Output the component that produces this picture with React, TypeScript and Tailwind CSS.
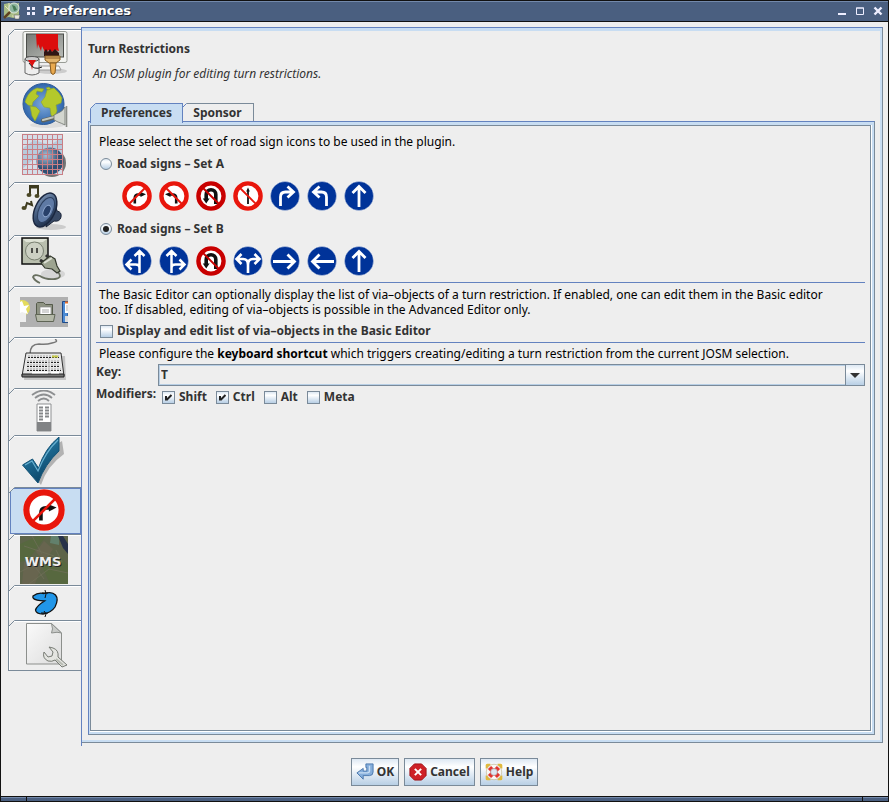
import React, { useState } from 'react';

type Children = { children?: React.ReactNode };

/* ---------- road signs ---------- */

function Prohibit({ tone = '#e8160c', flip = false, size = 'size-[30px]', children }: Children & { tone?: string; flip?: boolean; size?: string }) {
  return (
    <svg viewBox="0 0 30 30" className={size} aria-hidden="true">
      <circle cx="15" cy="15" r="15" fill="#fff" />
      <circle cx="15" cy="15" r="12.6" fill="#fff" stroke={tone} strokeWidth="4.4" />
      {children}
      <path d={flip ? 'M6 24 24 6' : 'M6 6 24 24'} stroke={tone} strokeWidth="1.900" />
    </svg>
  );
}

function Mandatory({ children }: Children) {
  return (
    <svg viewBox="0 0 30 30" className="size-[30px]" aria-hidden="true">
      <circle cx="15" cy="15" r="15" fill="#fff" />
      <circle cx="15" cy="15" r="14.5" fill="#003399" stroke="#ccd3de" strokeWidth=".5" />
      <g fill="none" stroke="#fff" strokeWidth="2.8">{children}</g>
    </svg>
  );
}

const bentRight = (
  <g>
    <path d="M12.800 22.500v-5.500q0-3.500 3.500-3.500h3" fill="none" stroke="#111" strokeWidth="2.600" />
    <path d="M18.500 11 24 13.300 18.500 16z" fill="#111" />
  </g>
);
const NoRight = ({ size }: { size?: string }) => <Prohibit flip size={size}>{bentRight}</Prohibit>;
const NoLeft = () => <Prohibit><g transform="translate(30 0) scale(-1 1)">{bentRight}</g></Prohibit>;
const NoUTurn = () => (
  <Prohibit tone="#c80000">
    <path d="M10.200 19v-5.500a4.800 4.800 0 0 1 9.600 0V23" fill="none" stroke="#111" strokeWidth="3.600" />
    <path d="M6.800 17.500h6.800l-3.400 5z" fill="#111" />
  </Prohibit>
);
const NoStraight = () => (
  <Prohibit>
    <path d="M15 23V9" stroke="#111" strokeWidth="1.800" />
    <path d="M13.200 10.500 15 6.500 16.800 10.500z" fill="#111" />
  </Prohibit>
);
const OnlyRight = () => <Mandatory><path d="M10.500 25v-9q0-5 5-5h8M17.500 5.500l6 5.500-6 5.500" /></Mandatory>;
const OnlyLeft = () => <Mandatory><path d="M19.500 25v-9q0-5-5-5h-8M12.500 5.500l-6 5.500 6 5.500" /></Mandatory>;
const OnlyStraight = () => <Mandatory><path d="M15 26V6M8.500 12 15 5.500l6.500 6.500" /></Mandatory>;
const StraightLeft = () => <Mandatory><path d="M17.500 27V5.500M12.500 10l5-5 5 5M17.500 24v-2q0-3.500-4-3.500H4.500M9.500 13.500l-5 5 5 5" strokeWidth="2.500" /></Mandatory>;
const StraightRight = () => <Mandatory><path d="M12.500 27V5.500M7.500 10l5-5 5 5M12.500 24v-2q0-3.500 4-3.500h9M20.500 13.500l5 5-5 5" strokeWidth="2.500" /></Mandatory>;
const LeftRight = () => <Mandatory><path d="M15 27v-8q0-6-5-6H3.500M15 19q0-6 5-6h6.500M8.500 8l-5 5 5 5M21.500 8l5 5-5 5" strokeWidth="2.600" /></Mandatory>;
const ArrowRight = () => <Mandatory><path d="M3 15.500h22M17.500 8.500l7 7-7 7" /></Mandatory>;
const ArrowLeft = () => <Mandatory><path d="M27 15.500H5M12.500 8.500l-7 7 7 7" /></Mandatory>;

/* ---------- category icons ---------- */

function Art({ children }: Children) {
  return <svg viewBox="0 0 48 48" className="size-12 shrink-0" aria-hidden="true">{children}</svg>;
}

const DisplayIcon = () => (
  <Art>
    <defs><linearGradient id="scr" x2="1" y2="1"><stop stopColor="#777a76" /><stop offset="1" stopColor="#b9bcb7" /></linearGradient></defs>
    <ellipse cx="31" cy="40" rx="16" ry="3" fill="#ccc" />
    <path d="M12 35h27l2 4H12z" fill="#f5f5f3" stroke="#999" />
    <rect x="3" y=".5" width="44" height="31" rx="2" fill="#f3f4f1" stroke="#999c96" />
    <rect x="6.500" y="3" width="37" height="23" fill="url(#scr)" stroke="#4b4d49" />
    <path d="M16 3h22v13l1 4-4-1-3 2-3-2-4 2-3-6-1 5-3-7-1 5z" fill="#dc0d0d" />
    <path d="M26 18l2 3 2-3 2 3 3-3 4 4v3H24v-4z" fill="#301515" />
    <path d="M25 25h15v4l-4 3h-7l-4-3z" fill="#e3b46b" stroke="#865a1f" />
    <path d="M25 27h15" stroke="#8b5b29" />
    <path d="M30 32h6l-1 10q-2 3-4 0z" fill="#e9a94e" stroke="#865a1f" />
    <path d="M5 28v14q7 4 14 0V28z" fill="#eee" stroke="#666" />
    <ellipse cx="12" cy="28" rx="7" ry="2.500" fill="#ccc" stroke="#555" />
    <path d="M8 29h8l-3 5-1 5-1-5z" fill="#d11" />
    <path d="M9 32q5 8 13 4" fill="none" stroke="#222" />
  </Art>
);
const GlobeIcon = () => (
  <Art>
    <defs><radialGradient id="sea"><stop stopColor="#80aadc" /><stop offset="1" stopColor="#2f66ac" /></radialGradient></defs>
    <ellipse cx="27" cy="43" rx="17" ry="3" fill="#ddd" />
    <circle cx="23.500" cy="22" r="20.500" fill="url(#sea)" stroke="#2c5a99" />
    <path d="M6 17q3-8 11-11l7 1-2 3-5-1-1 3 3 2-3 3-3 3-1 4-4-1-3-3zM10 24l6 1 4 4-2 4-3 6-3-5-1-5zM27 8l7-2q5 4 8 10l-1 5-5 2 1 6-3 7-3-3-1-7-6-1-3-5 4-5zM26 6l3-1 2 2-3 1z" fill="#b4c92b" stroke="#8ca52a" strokeWidth=".6" />
    <path d="M23 38.500l13-3.500" stroke="#5f635d" strokeWidth="4" strokeLinecap="round" />
    <path d="M23 38l13-3.500" stroke="#c3c7be" strokeWidth="2.200" strokeLinecap="round" />
    <path d="M34 33l4-2q4-1 7-6v18q-4-2-7-3l-4-2z" fill="#d3d6cf" stroke="#6f736d" strokeWidth=".8" />
    <path d="M46.500 24v21" stroke="#8b8e88" strokeWidth="1.600" />
  </Art>
);
const GridIcon = () => (
  <Art>
    <defs><radialGradient id="orb" cx=".35" cy=".3"><stop stopColor="#a9bfd4" /><stop offset="1" stopColor="#2f4f72" /></radialGradient></defs>
    <circle cx="32" cy="30" r="14" fill="#555" opacity=".8" />
    <rect x="2" y="1" width="41" height="41" fill="#d5dee8" />
    <path d="M2 16l12-9 16 5 13-8v22H14L2 36z" fill="#b8cbdc" />
    <circle cx="30" cy="28" r="13.500" fill="url(#orb)" />
    <path d="M2.500 1v41M7.500 1v41M12.500 1v41M17.500 1v41M22.500 1v41M27.500 1v41M32.500 1v41M37.500 1v41M42.500 1v41M2 1.500h41M2 6.500h41M2 11.500h41M2 16.500h41M2 21.500h41M2 26.500h41M2 31.500h41M2 36.500h41M2 41.500h41" stroke="#c97f86" />
  </Art>
);
const AudioIcon = () => (
  <Art>
    <defs><linearGradient id="cone" x2="1" y2="1"><stop stopColor="#8aa0c0" /><stop offset=".5" stopColor="#3d5578" /><stop offset="1" stopColor="#16243c" /></linearGradient></defs>
    <ellipse cx="31" cy="42" rx="15" ry="3" fill="#ccc" />
    <path d="M33 10l4 16q5 1 4 6t-7 4l-8 6z" fill="#394a66" stroke="#1b2538" />
    <ellipse cx="25" cy="25" rx="10" ry="18" transform="rotate(25 25 25)" fill="url(#cone)" stroke="#1b2740" strokeWidth="1.500" />
    <ellipse cx="26" cy="25" rx="7" ry="13.500" transform="rotate(25 26 25)" fill="#5f7aa5" stroke="#2c3f5f" />
    <ellipse cx="27" cy="26" rx="3.500" ry="6" transform="rotate(25 27 26)" fill="#28406a" stroke="#8ea6cd" />
    <path d="M10 10V1h8v9M10 2.500h8" fill="none" stroke="#3d3a1f" strokeWidth="2" />
    <ellipse cx="9" cy="10" rx="2.500" ry="2" fill="#4a4725" /><ellipse cx="17" cy="11" rx="2.500" ry="2" fill="#4a4725" />
    <path d="M5 24l2-6 5 2-1-4" fill="none" stroke="#3d3a1f" strokeWidth="2" /><ellipse cx="4" cy="23" rx="2.500" ry="2" fill="#4a4725" />
  </Art>
);
const SocketIcon = () => (
  <Art>
    <ellipse cx="33" cy="37" rx="12" ry="5" fill="#d5d5d5" />
    <rect x="2" y="1" width="26" height="26" fill="#b9bfae" stroke="#111" strokeWidth="1.500" />
    <path d="M3 2h24l-4 3H6z" fill="#dfe3d6" />
    <circle cx="14.500" cy="14" r="9" fill="#ccd0c3" stroke="#798071" />
    <path d="M12 11v5M17 11v5" stroke="#222" strokeWidth="1.500" />
    <path d="M38 35q5 6-3 7-9 1-15-3-6-2-7 1 2 4 7 6" fill="none" stroke="#697060" strokeWidth="1.800" />
    <path d="M20 23l5 3M26 18l4 4" stroke="#333" strokeWidth="3" />
    <path d="M21 26l9-7 5 3 2 7 3 5-3 2-5-4-7-1z" fill="#9da490" stroke="#343a2e" strokeWidth="1.200" />
    <path d="M24 26l8-5" stroke="#dde0d5" strokeWidth="2" />
  </Art>
);
const ToolbarIcon = () => (
  <svg viewBox="0 0 48 30" className="h-[30px] w-12 shrink-0" aria-hidden="true">
    <rect width="48" height="30" fill="#b0b0b0" />
    <circle cx="2" cy="11" r="8" fill="#f5e93f" opacity=".75" />
    <path d="M0 14h6v11H0z" fill="#eee" />
    <path d="M2 4l2 5 5-1-3 4 2 5-6-2-2 1V5z" fill="#fff" />
    <path d="M16.500 20V6.500l1-1h6l2 2h7V20z" fill="#8e9383" stroke="#555b4b" />
    <path d="M20 10h11v9H20z" fill="#fff" stroke="#888" strokeWidth=".7" />
    <path d="M22 13h7M22 15h7" stroke="#aaa" />
    <path d="M15.500 17.500h19.500l-1.500 7h-16.500z" fill="#b4b8a8" stroke="#5f6555" />
    <path d="M42.500 4.500H48v21h-5.500z" fill="#4c8bd4" stroke="#204a87" />
    <path d="M45 5h3v11h-3z" fill="#fff" /><path d="M45 5.500h3" stroke="#e9722c" strokeWidth="2" />
    <path d="M46 9h2M46 11h2M46 13h2" stroke="#999" strokeWidth=".7" />
    <path d="M45 19h3v6h-3z" fill="#ddd" />
  </svg>
);
const KeyboardIcon = () => (
  <Art>
    <path d="M10 15q0-10 9-10 7 1 13-1 6-1 4-3l-1-2" fill="none" stroke="#777" strokeWidth="1.500" />
    <path d="M6 17h39l1 24H4z" fill="#aaa" opacity=".6" />
    <path d="M6 14h35l3 23H2z" fill="#e8e8e8" stroke="#333" />
    <path d="M2 35h42v3H2z" fill="#777" stroke="#222" />
    <path d="M8 17.500h31M7 22.500h33M7 26.500h33M7 30.500h34" stroke="#222" strokeWidth="3" strokeDasharray="2 1" />
    <path d="M8 17h31M7 22h33M7 26h33M7 30h34" stroke="#fff" strokeWidth="1.700" strokeDasharray="2 1" />
    <path d="M32 17.500h6" stroke="#c9cd48" strokeWidth="2" />
    <path d="M12 33.500h16M31 33.500h8" stroke="#fff" strokeWidth="2" />
    <path d="M29 19v14" stroke="#ccc" strokeWidth="1.500" />
  </Art>
);
const RemoteIcon = () => (
  <svg viewBox="0 0 48 44" className="h-11 w-12 shrink-0" aria-hidden="true">
    <g fill="none" stroke="#8d8f91" strokeWidth="1.800">
      <path d="M12 5q12-9 23 0M15 8q9-7 17 0M18 11q6-5 11 0" />
    </g>
    <path d="M17 14h14v27H17z" fill="#fff" stroke="#8d8f91" />
    <path d="M17 32h14v9H17z" fill="#818385" />
    <path d="M19 17.500h4M25 17.500h4M19 20.500h4M25 20.500h4M19 23.500h4M25 23.500h4M19 26.500h4M25 26.500h4M19 29.500h4" stroke="#858789" strokeWidth="1.800" />
  </svg>
);
const CheckIcon = () => (
  <Art>
    <defs><linearGradient id="chk" x1=".2" y1="0" x2=".7" y2="1"><stop stopColor="#2c88b4" /><stop offset="1" stopColor="#083f61" /></linearGradient></defs>
    <path d="M7 30l6-5 6 9Q26 13 42 4l2 13Q27 29 21 48z" fill="#999" opacity=".7" />
    <path d="M2.500 28l10-6 6 9Q25 11 39 0v14Q25 27 18 46z" fill="url(#chk)" stroke="#145477" />
    <path d="M5 28l7-4 6 10Q26 14 38 3" fill="none" stroke="#69b1d2" strokeWidth="1.200" />
  </Art>
);
const WmsIcon = () => (
  <Art>
    <rect width="48" height="48" fill="#5d6449" />
    <path d="M0 8l18-8h8L8 24 0 26zM22 30l18-9 8 8v19H30z" fill="#57683f" />
    <path d="M4 26l18 4-7 18H2zM24 5l9 8-8 12-9-9z" fill="#68654f" />
    <path d="M31 0h8v9l-9-2z" fill="#62806c" />
    <path d="M38 0l5 12 5 6V8L43 0z" fill="#273249" />
    <path d="M0 36l14-7 10 14M4 10l30 10M9 48l20-15 19 4M12 0l10 18M36 14l6 12" fill="none" stroke="#6f6f58" strokeWidth=".8" />
    <text x="24" y="31" textAnchor="middle" fontFamily="DejaVu Sans, sans-serif" fontSize="13" fontWeight="bold" fill="#222" aria-hidden="true">WMS</text>
    <text x="23" y="30" textAnchor="middle" fontFamily="DejaVu Sans, sans-serif" fontSize="13" fontWeight="bold" fill="#eee">WMS</text>
  </Art>
);
const BlobIcon = () => (
  <svg viewBox="0 0 48 28" className="h-7 w-12 shrink-0" aria-hidden="true">
    <path d="M13 7Q18 3 24 4.500 32 2 35.500 6 39 10 35 18 31 24 23 25 16 25 15.500 21q1-4 9-9-9-.5-11-2.500-1-1-.5-2.500z" fill="#2196e8" stroke="#111" strokeWidth="1.300" />
    <path d="M25 1l1 4-1 4M22 4h6M24 22l2 3-1 3M21 24h7" fill="none" stroke="#111" />
  </svg>
);
const AdvancedIcon = () => (
  <Art>
    <defs><linearGradient id="pg" x2="1" y2="1"><stop stopColor="#fafafa" /><stop offset="1" stopColor="#ddd" /></linearGradient></defs>
    <path d="M6.500 2.500h25l10 9.500v31h-35z" fill="url(#pg)" stroke="#8c8f8c" />
    <path d="M31.500 2.500q2 6 0 9.500 6-1.500 10 0z" fill="#c9cbc9" stroke="#8c8f8c" />
    <path d="M24 31q-2 6 4 9 4 1 7-1l7 7 5-2-9-8q1-7-5-9l-4-1 4 5-1 4-4 1z" fill="#e4e5e1" stroke="#777b74" />
    <path d="M36 38l7 6" stroke="#b8bbb3" strokeWidth="2" />
  </Art>
);

const categories: { name: string; height: string; icon: React.ReactNode }[] = [
  { name: 'Display', height: 'h-[51px]', icon: <DisplayIcon /> },
  { name: 'Connection', height: 'h-[51px]', icon: <GlobeIcon /> },
  { name: 'Projection', height: 'h-[51px]', icon: <GridIcon /> },
  { name: 'Audio', height: 'h-[53px]', icon: <AudioIcon /> },
  { name: 'Plugins', height: 'h-[51px]', icon: <SocketIcon /> },
  { name: 'Toolbar', height: 'h-[51px]', icon: <ToolbarIcon /> },
  { name: 'Keyboard', height: 'h-[51px]', icon: <KeyboardIcon /> },
  { name: 'Remote control', height: 'h-[47px]', icon: <RemoteIcon /> },
  { name: 'Validator', height: 'h-[52px]', icon: <CheckIcon /> },
  { name: 'Turn restrictions', height: 'h-[47px]', icon: <NoRight size="size-[42px]" /> },
  { name: 'WMS', height: 'h-[51px]', icon: <WmsIcon /> },
  { name: 'Areas', height: 'h-[35px]', icon: <BlobIcon /> },
  { name: 'Advanced', height: 'h-[50px]', icon: <AdvancedIcon /> },
];

function Sidebar() {
  const [active, setActive] = useState('Turn restrictions');
  return (
    <nav className="mt-[7px] ml-[7px] w-[73px] shrink-0 self-start border-b border-[#7a8a99]">
      {categories.map((c, i) => (
        <button
          key={c.name}
          type="button"
          aria-label={c.name}
          onClick={() => setActive(c.name)}
          className={`relative flex w-full border-t border-l border-[#7a8a99] ${c.height} ${active === c.name ? 'pl-px' : ''}`}
        >
          <span className={`flex h-full w-full items-center justify-center pr-1 pb-0.5 ${active === c.name ? 'border border-[#6382bf] bg-[#c8ddf2]' : 'border-t border-l border-white'}`}>
            {c.icon}
          </span>
          <svg viewBox="0 0 7 7" className="absolute -top-px -left-px size-[7px]" aria-hidden="true">
            <path d="M0 0h7L0 7z" fill="#eee" />
            {i > 0 && <path d="M.5 0v7" stroke="#7a8a99" />}
            <path d="M.5 6.500l6-6" stroke="#7a8a99" />
          </svg>
        </button>
      ))}
    </nav>
  );
}

/* ---------- form controls ---------- */

const face = 'border-[#7a8a99] bg-linear-to-b from-[#dde8f3] via-white via-30% to-[#b8cfe5]';

function Check({ label, on = false }: { label: string; on?: boolean }) {
  return (
    <label className="relative flex h-5 items-center gap-1 font-bold text-[#333]">
      <input type="checkbox" defaultChecked={on} className={`peer size-[13px] shrink-0 appearance-none border ${face}`} />
      <svg viewBox="0 0 13 13" className="pointer-events-none absolute left-0 hidden size-[13px] peer-checked:block" aria-hidden="true">
        <path d="M4 5v4.500M4.500 9 9.500 4" fill="none" stroke="#222" strokeWidth="2" />
      </svg>
      {label}
    </label>
  );
}

function Radio({ label, on = false }: { label: string; on?: boolean }) {
  return (
    <label className="relative ml-1 flex h-5 items-center gap-[5px] font-bold text-[#333]">
      <input type="radio" name="signs" defaultChecked={on} className={`peer size-3 shrink-0 appearance-none rounded-full border ${face}`} />
      <span className="pointer-events-none absolute left-[3px] hidden size-1.5 rounded-full bg-[#222] peer-checked:block" />
      {label}
    </label>
  );
}

function Signs({ children }: Children) {
  return <div className="ml-[26px] flex gap-[7px] pt-[7px]">{children}</div>;
}

function ActionButton({ label, children }: Children & { label: string }) {
  return (
    <button type="button" className={`flex h-7 items-center gap-[3px] border px-1 font-bold text-[#333] ${face}`}>
      <svg viewBox="0 0 20 20" className="size-[18px]" aria-hidden="true">{children}</svg>
      {label}
    </button>
  );
}

const rule = 'border-t border-[#6382bf]';

function PluginPreferences() {
  return (
    <form className="flex-1 border border-[#7a8a99] px-[5px] pt-2">
      <p className="ml-[3px] leading-4">Please select the set of road sign icons to be used in the plugin.</p>
      <div className="pt-1"><Radio label="Road signs – Set A" /></div>
      <Signs>
        <NoRight /><NoLeft /><NoUTurn /><NoStraight /><OnlyRight /><OnlyLeft /><OnlyStraight />
      </Signs>
      <div className="pt-2"><Radio label="Road signs – Set B" on /></div>
      <Signs>
        <StraightLeft /><StraightRight /><NoUTurn /><LeftRight /><ArrowRight /><ArrowLeft /><OnlyStraight />
      </Signs>
      <div className={`mt-1.5 pt-1 ${rule}`}>
        <p className="ml-[3px] pr-8 leading-[15px]">
          The Basic Editor can optionally display the list of via–objects of a turn restriction. If enabled, one can edit them in the Basic editor too. If disabled, editing of via–objects is possible in the Advanced Editor only.
        </p>
        <div className="mt-1 ml-1"><Check label="Display and edit list of via–objects in the Basic Editor" /></div>
      </div>
      <div className={`mt-px pt-[3px] ${rule}`}>
        <p className="ml-[3px] leading-4">
          Please configure the <b>keyboard shortcut</b> which triggers creating/editing a turn restriction from the current JOSM selection.
        </p>
        <div className="mt-0.5 grid grid-cols-[62px_1fr] font-bold text-[#333]">
          <label htmlFor="key" className="leading-4">Key:</label>
          <div className="relative h-[22px]">
            <select id="key" defaultValue="T" className="h-full w-full appearance-none border border-[#7a8a99] bg-[#eee] pl-0.5 font-bold inset-ring inset-ring-[#b8cfe5]">
              <option>T</option>
              <option>R</option>
            </select>
            <span className={`pointer-events-none absolute top-0 right-0 flex h-full w-5 items-center justify-center border ${face}`}>
              <svg viewBox="0 0 10 5" className="h-[5px] w-2.5" aria-hidden="true"><path d="M0 0h10L5 5z" fill="#333" /></svg>
            </span>
          </div>
          <span className="leading-4">Modifiers:</span>
          <div className="ml-1 flex gap-[9px] pt-px">
            <Check label="Shift" on />
            <Check label="Ctrl" on />
            <Check label="Alt" />
            <Check label="Meta" />
          </div>
        </div>
      </div>
    </form>
  );
}

function Corner() {
  return (
    <svg viewBox="0 0 6 6" className="absolute -top-px -left-px size-1.5" aria-hidden="true">
      <path d="M0 0h6L0 6z" fill="#eee" /><path d="M.5 5.500l5-5" stroke="#6382bf" />
    </svg>
  );
}

export default function App() {
  return (
    <div className="flex h-screen flex-col border-x border-[#111] bg-[#eee] font-['Noto_Sans',sans-serif] text-[12px] text-black">
      <header className="flex h-[22px] shrink-0 items-center border-y border-[#111] bg-[#4a5f80] pr-[5px] pl-0.5 font-['DejaVu_Sans',sans-serif] inset-shadow-[0_1px_0_#7389ab]">
        <svg viewBox="0 0 18 18" className="size-[18px]" aria-hidden="true">
          <path d="M1 2l5-1 4 1 6-1v14l-6 1-4-1-5 1z" fill="#a9bd86" />
          <path d="M2 4l6 6M6 1v9M9 14h7" stroke="#e4e3b9" />
          <circle cx="11" cy="6" r="5" fill="#8fb6a0" stroke="#dde7dd" />
          <path d="M9 3l3 1 2 4-3 1z" fill="#467a55" />
          <path d="M7 10l-6 6" stroke="#5f4221" strokeWidth="2.500" />
          <path d="M11 13h6l-1 4h-4z" fill="#e8e8e0" stroke="#555" strokeWidth=".5" />
        </svg>
        <svg viewBox="0 0 9 8" className="ml-1.5 h-2 w-[9px]" aria-hidden="true">
          <path d="M0 0h3v3H0zM5 0h3v3H5zM0 5h3v3H0zM5 5h3v3H5z" fill="#eef" />
        </svg>
        <h1 className="ml-[7px] flex-1 text-[13px] font-bold text-white text-shadow-[1px_1px_0_#1b2330]">Preferences</h1>
        <div className="flex gap-2">
          <button type="button" aria-label="Minimize" className="size-2.5"><svg viewBox="0 0 10 10"><path d="M1 7h8v2H1z" fill="#eef" /></svg></button>
          <button type="button" aria-label="Maximize" className="size-2.5"><svg viewBox="0 0 10 10"><path d="M1.500 2h7v6.500h-7zM1 2h8" fill="none" stroke="#eef" /></svg></button>
          <button type="button" aria-label="Close" className="size-2.5"><svg viewBox="0 0 10 10"><path d="M1.500 1.500l7 7M8.500 1.500l-7 7" stroke="#eef" strokeWidth="2.400" /></svg></button>
        </div>
      </header>

      <div className="flex min-h-0 flex-1">
        <Sidebar />
        <div className="mt-[5px] mr-[5px] flex min-w-0 flex-1 border-l border-[#6382bf] pb-[3px]">
          <main className="flex min-w-0 flex-1 flex-col border-t border-r border-b border-t-[#6382bf] border-r-[#7a8a99] border-b-[#7a8a99]">
            <div className="flex flex-1 flex-col border-t-3 border-r-2 border-b-2 border-[#c8ddf2] pr-[5px] pb-[5px] pl-1.5">
              <h2 className="mt-[9px] leading-[18px] font-bold text-[#333]">Turn Restrictions</h2>
              <p className="mt-[7px] ml-[5px] leading-[18px] text-[#333] italic">An OSM plugin for editing turn restrictions.</p>
              <div role="tablist" className="mt-5 ml-0.5 flex font-bold text-[#333]">
                <button type="button" role="tab" aria-selected="true" className="relative z-10 -mb-0.5 h-5 w-[93px] border-t border-r border-l border-[#6382bf] bg-[#c8ddf2] pb-0.5">
                  <Corner />Preferences
                </button>
                <button type="button" role="tab" aria-selected="false" className="relative -ml-px h-[18px] w-[72px] border-t border-r border-[#7a8a99]">
                  <Corner />Sponsor
                </button>
              </div>
              <div className="flex flex-1 border border-t-[#6382bf] border-r-[#7a8a99] border-b-[#7a8a99] border-l-[#6382bf]">
                <div className="flex flex-1 border-t-3 border-r-2 border-b-2 border-l border-[#c8ddf2]">
                  <div className="flex flex-1 border-r border-b border-white">
                    <PluginPreferences />
                  </div>
                </div>
              </div>
            </div>
          </main>
        </div>
      </div>

      <footer className="flex shrink-0 justify-center gap-[5px] pt-3 pb-2.5">
        <ActionButton label="OK">
          <path d="M8 6v3h4V5h-1V1h8v9q0 4-4 4H8v4L1 11z" fill="#85aedb" stroke="#4674aa" />
          <path d="M3 11h10q2 0 2-2V3" fill="none" stroke="#c9def4" strokeWidth="1.500" />
        </ActionButton>
        <ActionButton label="Cancel">
          <path d="M6 1h8l5 5v8l-5 5H6l-5-5V6z" fill="#ce2127" stroke="#9c1015" />
          <path d="M6.500 6.500l7 7M13.500 6.500l-7 7" stroke="#fff" strokeWidth="2.200" />
        </ActionButton>
        <ActionButton label="Help">
          <path d="M2.500 6V2.500H6M14 2.500h3.500V6M17.500 14v3.500H14M6 17.500H2.500V14" fill="none" stroke="#e0b93c" strokeWidth="3.500" strokeLinejoin="round" />
          <circle cx="10" cy="10" r="8.600" fill="#f8f8f5" stroke="#b9a77a" strokeWidth=".6" />
          <path d="M5 5l10 10M15 5L5 15" stroke="#e3352f" strokeWidth="5" />
          <circle cx="10" cy="10" r="3.800" fill="#dde7f1" stroke="#a88" strokeWidth=".7" />
        </ActionButton>
      </footer>
      <div className="flex h-1.5 shrink-0 border-y border-[#111] bg-[#4a5f80] inset-shadow-[0_1px_0_#7389ab]">
        <span className="w-[26px] border-r border-[#111]" />
        <span className="flex-1" />
        <span className="w-[26px] border-l border-[#111]" />
      </div>
    </div>
  );
}
